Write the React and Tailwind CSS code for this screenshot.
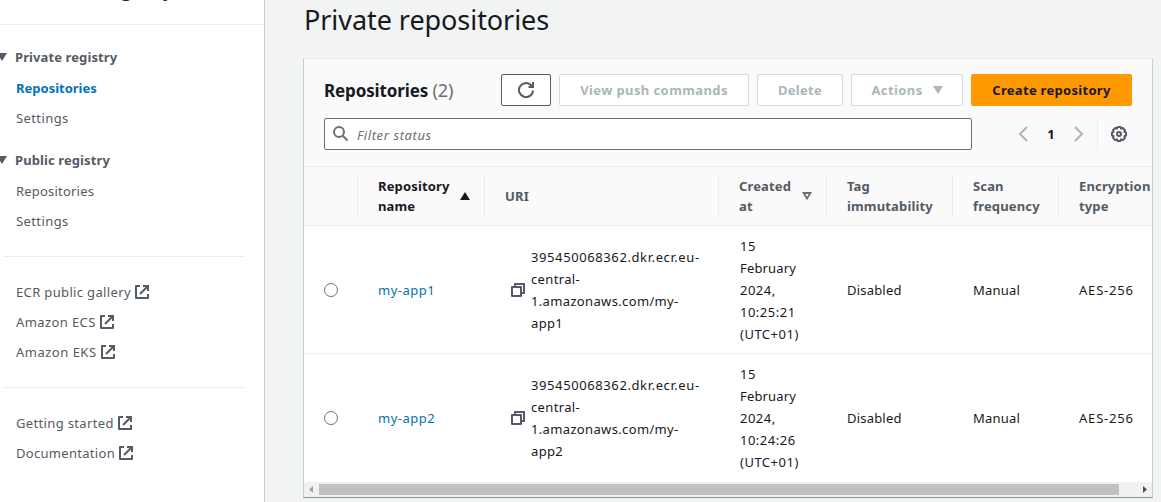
import React from "react";

const ExternalIcon = ({ className = "" }) => (
  <svg viewBox="0 0 14 14" className={"size-[14px] shrink-0 " + className} fill="none" stroke="#545b64" strokeWidth="2">
    <path d="M5 1H1V13H13V9" strokeLinejoin="round" />
    <path d="M8 1H13V6M13 1L5 9" />
  </svg>
);

const CopyIcon = () => (
  <svg viewBox="0 0 14 14" className="size-[14px] shrink-0" fill="none" stroke="#545b64" strokeWidth="2" strokeLinejoin="round">
    <path d="M1 4H10V13H1Z" />
    <path d="M4 4V1H13V10H10" />
  </svg>
);

const RefreshIcon = () => (
  <svg viewBox="0 0 16 16" className="size-4" fill="none" stroke="#545b64" strokeWidth="2">
    <path d="M15 8.5A7 7 0 1 1 12.8 3L15 5" />
    <path d="M10.500 5H15V0" />
  </svg>
);

const SearchIcon = () => (
  <svg viewBox="0 0 16 16" className="size-4 shrink-0" fill="none" stroke="#687078" strokeWidth="2">
    <circle cx="6" cy="6" r="5" />
    <path d="M9.500 9.500L14.500 14.500" />
  </svg>
);

const GearIcon = () => (
  <svg viewBox="0 0 16 16" className="size-4 shrink-0" fill="none" stroke="#545b64" strokeWidth="2" strokeLinejoin="round">
    <path d="M6.500 1h3l.6 1.600 1.700-.7 2.200 2.200-.7 1.700 1.700.7v3l-1.700.7.7 1.700-2.200 2.200-1.700-.7L9.500 15h-3l-.6-1.600-1.700.7L2 11.900l.7-1.700L1 9.500v-3l1.700-.7L2 4.100l2.200-2.200 1.700.7z" />
    <circle cx="8" cy="8" r="2" />
  </svg>
);

const Chevron = ({ flip }) => (
  <svg viewBox="0 0 10 16" className="h-4 w-[10px]" fill="none" stroke="#aab7b8" strokeWidth="2">
    <path d={flip ? "M1 1L8 8L1 15" : "M9 1L2 8L9 15"} />
  </svg>
);

const SectionTitle = ({ children }) => (
  <div className="flex h-5 items-center gap-2">
    <svg viewBox="0 0 10 8" className="-ml-[3px] h-2 w-[10px]" fill="#545b64">
      <path d="M0 0H10L5 8Z" />
    </svg>
    <span className="pt-px font-bold tracking-[0.1px]">{children}</span>
  </div>
);

const NavLink = ({ children, external, className = "" }) => (
  <a className={"flex h-[30px] items-center pl-4 " + className}>
    <span className="pt-[2px]">{children}</span>
    {external && <ExternalIcon className="ml-1" />}
  </a>
);

const Sidebar = () => (
  <aside className="h-full w-[265px] shrink-0 overflow-hidden border-r border-[#c8cdcd] bg-white text-[13px] text-[#545b64]">
    <div className="h-[25px] overflow-hidden border-b border-[#eaeded]">
      <h2 className="-mt-[21px] flex w-[173px] justify-end text-[18px] leading-[22px] font-bold whitespace-nowrap text-[#16191f]">
        Container Registry
      </h2>
    </div>
    <nav className="pt-[22px]">
      <SectionTitle>Private registry</SectionTitle>
      <div className="h-[6px]" />
      <NavLink className="font-bold text-[#0073bb]">Repositories</NavLink>
      <NavLink className="tracking-[0.4px]">Settings</NavLink>
      <div className="h-[17px]" />
      <SectionTitle>Public registry</SectionTitle>
      <div className="h-[6px]" />
      <NavLink className="tracking-[0.2px]">Repositories</NavLink>
      <NavLink className="tracking-[0.4px]">Settings</NavLink>
      <div className="mt-5 mr-5 ml-1 h-px bg-[#eaeded]" />
      <div className="h-5" />
      <NavLink external className="tracking-[0.35px]">ECR public gallery</NavLink>
      <NavLink external className="tracking-[0.4px]">Amazon ECS</NavLink>
      <NavLink external className="tracking-[0.5px]">Amazon EKS</NavLink>
      <div className="mt-5 mr-5 ml-1 h-px bg-[#eaeded]" />
      <div className="h-5" />
      <NavLink external className="tracking-[0.35px]">Getting started</NavLink>
      <NavLink external className="tracking-[0.3px]">Documentation</NavLink>
    </nav>
  </aside>
);

const Button = ({ children, className }) => (
  <button className={"flex h-8 items-center justify-center rounded-[2px] border text-[13px] font-bold whitespace-nowrap " + className}>
    {children}
  </button>
);

const disabled = "border-[#d5dbdb] bg-white text-[#aab7b8]";
const columns = "grid grid-cols-[54px_127px_234px_108px_126px_106px_140px]";

const HeadCell = ({ children, last, className = "", icon }) => (
  <div className={"my-[9px] flex h-10 items-center pl-5 leading-5 tracking-[0.15px] " + (last ? "" : "border-r border-[#eaeded] ") + className}>
    <div className="flex-1">{children}</div>
    {icon}
  </div>
);

const Row = ({ name, suffix, time, className }) => (
  <div className={columns + " h-32 items-center border-[#eaeded] leading-[22px] " + className}>
    <div className="pl-5">
      <div className="size-[14px] rounded-full border border-[#687078] bg-white" />
    </div>
    <a className="pl-5 tracking-[0.5px] text-[#0073bb]">{name}</a>
    <div className="flex items-center gap-[6px] pl-[26px]">
      <CopyIcon />
      <div className="tracking-[0.35px] whitespace-nowrap">
        <span className="tracking-[0.6px]">395450068362.dkr.ecr.eu-</span>
        <br />
        central-
        <br />
        1.amazonaws.com/my-
        <br />
        {suffix}
      </div>
    </div>
    <div className="pl-[21px] tracking-[0.5px]">
      15
      <br />
      <span className="tracking-[0.15px]">February</span>
      <br />
      2024,
      <br />
      {time}
      <br />
      (UTC+01)
    </div>
    <div className="pl-5 tracking-[0.2px]">Disabled</div>
    <div className="pl-5 tracking-[0.2px]">Manual</div>
    <div className="pl-5 tracking-[0.8px]">AES-256</div>
  </div>
);

const Scrollbar = () => (
  <div className="flex h-[15px] items-center bg-[#f1f1f1]">
    <svg viewBox="0 0 15 15" className="size-[15px]" fill="#a3a3a3">
      <path d="M9 4V11L5 7.500Z" />
    </svg>
    <div className="h-[11px] w-[800px] bg-[#c1c1c1]" />
    <div className="flex-1" />
    <svg viewBox="0 0 15 15" className="size-[15px]" fill="#505050">
      <path d="M6 4V11L10 7.500Z" />
    </svg>
  </div>
);

export default function App() {
  return (
    <div className="flex h-[502px] w-[1161px] overflow-hidden bg-[#f2f3f3] font-['Noto_Sans',sans-serif] text-[13px] text-[#16191f]">
      <Sidebar />
      <main className="flex min-w-0 flex-1 flex-col pl-[38px]">
        <h1 className="h-[58px] pt-[2px] pl-px text-[27px] leading-9 tracking-[-0.06px] whitespace-nowrap">Private repositories</h1>
        <section className="h-[440px] w-[850px] border border-t-[#eaeded] border-r-[#c8d0d0] border-b-[#879596] border-l-[#c8cdcd] bg-white">
          <div className="h-[108px] border-b border-[#eaeded] bg-[#fafafa] pt-[15px] pr-5 pl-5">
            <div className="flex items-center">
              <h2 className="w-[177px] text-[17px] tracking-[-0.12px] font-bold whitespace-nowrap">
                Repositories <span className="text-[18px] font-normal text-[#687078]">(2)</span>
              </h2>
              <div className="flex gap-2">
                <Button className="w-[50px] border-[#545b64] bg-white"><RefreshIcon /></Button>
                <Button className={"w-[190px] pt-[2px] tracking-[0.4px] " + disabled}>View push commands</Button>
                <Button className={"w-[86px] pt-[2px] tracking-[0.3px] " + disabled}>Delete</Button>
                <Button className={"w-[112px] gap-[10px] tracking-[0.4px] " + disabled}>
                  <span className="pt-[2px]">Actions</span>
                  <svg viewBox="0 0 10 8" className="h-2 w-[10px]" fill="#aab7b8"><path d="M0 0H10L5 8Z" /></svg>
                </Button>
                <Button className="w-[161px] border-[#ff9900] bg-[#ff9900] pt-[2px] tracking-[0.3px] text-[#16191f]">Create repository</Button>
              </div>
            </div>
            <div className="mt-3 flex h-8 items-center">
              <div className="flex h-8 w-[648px] items-center gap-2 rounded-[2px] border border-[#687078] bg-white pl-[8px] text-[#687078] italic">
                <SearchIcon />
                <span className="pt-[3px] tracking-[0.6px]">Filter status</span>
              </div>
              <div className="flex h-8 w-[126px] items-center justify-between border-r border-[#eaeded] pr-[13px] pl-[46px] font-bold">
                <Chevron />
                <span className="pt-px">1</span>
                <Chevron flip />
              </div>
              <div className="ml-[13px]"><GearIcon /></div>
            </div>
          </div>
          <div className="overflow-hidden">
            <div className={columns + " h-[59px] border-b border-[#eaeded] bg-[#fafafa] font-bold text-[#545b64]"}>
              <HeadCell />
              <HeadCell
                className="text-[#16191f]"
                icon={
                  <svg viewBox="0 0 10 8" className="mr-[14px] h-2 w-[10px]" fill="#16191f">
                    <path d="M5 0L10 8H0Z" />
                  </svg>
                }
              >
                Repository name
              </HeadCell>
              <HeadCell>URI</HeadCell>
              <HeadCell
                icon={
                  <svg viewBox="0 0 10 8" className="mr-[14px] h-2 w-[10px]" fill="none" stroke="#687078" strokeWidth="1.8">
                    <path d="M1.500 1H8.500L5 6.500Z" />
                  </svg>
                }
              >
                Created at
              </HeadCell>
              <HeadCell>Tag immutability</HeadCell>
              <HeadCell>Scan frequency</HeadCell>
              <HeadCell last>Encryption<br />type</HeadCell>
            </div>
            <Row name="my-app1" suffix="app1" time="10:25:21" className="border-b" />
            <Row name="my-app2" suffix="app2" time="10:24:26" className="" />
            <Scrollbar />
          </div>
        </section>
      </main>
    </div>
  );
}
